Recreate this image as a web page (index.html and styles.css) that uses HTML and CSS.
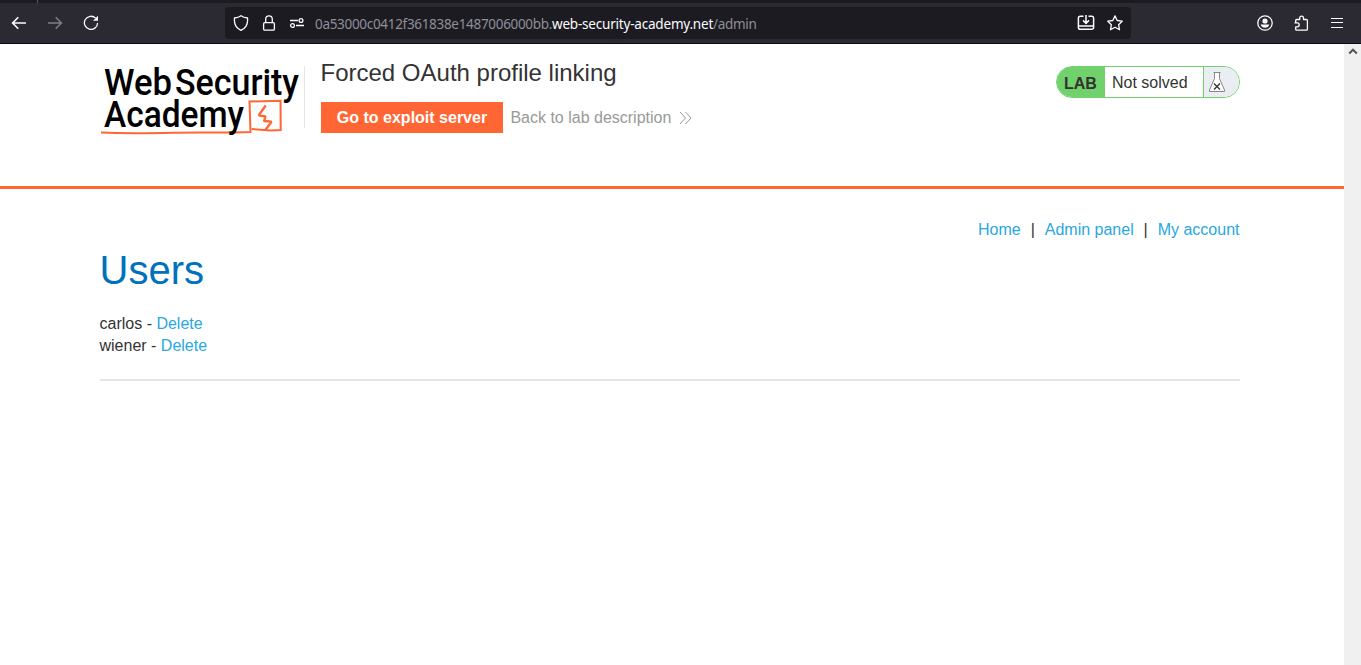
FILE: index.html
```
<!DOCTYPE html>
<html lang="en">
<head>
<meta charset="utf-8">
<title>Forced OAuth profile linking</title>
<link rel="stylesheet" href="styles.css">
</head>
<body>
<div class="tabstrip"><i class="tab-divider"></i></div>
<div class="toolbar">
  <div class="nav-buttons">
    <svg width="16" height="16" viewBox="0 0 16 16" class="icon"><path d="M15 8H1.5M7.3 2.3 1.6 8l5.7 5.7" stroke-width="1.6"/></svg>
    <svg width="16" height="16" viewBox="0 0 16 16" class="icon dim"><path d="M1 8h13.5M8.7 2.3 14.4 8l-5.7 5.7" stroke-width="1.5"/></svg>
    <svg width="16" height="16" viewBox="0 0 16 16" class="icon"><path d="M12.6 3.1A6.6 6.6 0 1 0 14.6 8"/><path class="solid" d="M15 .8v5h-5z"/></svg>
  </div>
  <div class="urlbar">
    <svg width="16" height="16" viewBox="0 0 16 16" class="icon"><path d="M8 .8c2 1.5 4.200 2 6.500 2.200.6 5.500-1.400 10-6.500 12.300C2.900 13 .9 8.500 1.500 3 3.800 2.800 6 2.300 8 .8z"/></svg>
    <svg width="16" height="16" viewBox="0 0 16 16" class="icon"><rect x="2.600" y="7.700" width="10.800" height="7.500" rx="1.200"/><path d="M4.700 7.500V4.200a3.300 3.300 0 0 1 6.600 0v3.300"/></svg>
    <svg width="16" height="16" viewBox="0 0 16 16" class="icon"><path d="M1 5.500h8M7 10.500h8" stroke-width="1.500"/><circle cx="12" cy="5.500" r="1.900"/><circle cx="3.500" cy="10.500" r="1.900"/></svg>
    <div class="url"><span class="url-sub">0a53000c0412f361838e1487006000bb.</span><span class="url-host">web-security-academy.net</span><span class="url-path">/admin</span></div>
    <svg width="18" height="16" viewBox="0 0 18 16" class="icon"><path d="M6.500 1.200H3.200a1.800 1.800 0 0 0-1.800 1.800v9.500a1.800 1.800 0 0 0 1.800 1.800h11.600a1.800 1.800 0 0 0 1.800-1.800V3a1.800 1.800 0 0 0-1.800-1.800h-3.300M1.500 11h15M9 0v8M6 5.400l3 3 3-3" stroke-width="1.500"/></svg>
    <svg width="16" height="16" viewBox="0 0 16 16" class="icon"><path d="m8 .9 2.200 4.600 5 .7-3.600 3.500.9 5L8 12.300l-4.500 2.400.9-5L.8 6.200l5-.7z" stroke-linejoin="round"/></svg>
  </div>
  <div class="tool-buttons">
    <svg width="16" height="16" viewBox="0 0 16 16" class="icon"><circle cx="8" cy="8" r="7.200"/><circle class="solid" cx="8" cy="6" r="2.600"/><path class="solid" d="M3.700 9.500h8.600c-.3 2-2.300 3.300-4.300 3.300s-4-1.300-4.300-3.300z"/></svg>
    <svg width="16" height="16" viewBox="0 0 16 16" class="icon"><path d="M2.700 7.500V5.500a1 1 0 0 1 1-1h3V3a1.900 1.900 0 0 1 3.800 0v1.500h2.900a1 1 0 0 1 1 1v8.700a1 1 0 0 1-1 1H3.700a1 1 0 0 1-1-1v-2.400h1.500a2 2 0 0 0 0-4H1.500" stroke-linejoin="round"/></svg>
    <svg width="16" height="16" viewBox="0 0 16 16" class="icon"><path d="M2 3.500h12M2 7.500h12M2 12.500h12" stroke-width="1"/></svg>
  </div>
</div>
<div class="viewport">
  <div class="page">
    <header class="lab-header">
      <svg class="logo" width="204" height="76" viewBox="0 0 204 76">
        <g class="logo-text"><text x="4" y="32.500" textLength="68" lengthAdjust="spacingAndGlyphs">Web</text><text x="75" y="32.500" textLength="124" lengthAdjust="spacingAndGlyphs">Security</text></g>
        <path class="logo-line" d="M1 70.500c25 1.200 49 .7 74 .2 25-.5 48 .3 75.500-.7L149.500 39.500l31-.8.200 29.300-10 .5-19-1.500"/>
        <g class="logo-text"><text x="4" y="65" textLength="140" lengthAdjust="spacingAndGlyphs">Academy</text></g>
        <path class="logo-bolt" d="m165.700 43.500-7 9.800 6.800 1.200-1.500 4.500 7.500.7-6 8"/>
      </svg>
      <div class="title-block">
        <h2>Forced OAuth profile linking</h2>
        <div class="actions">
          <a class="button">Go to exploit server</a>
          <a class="back">Back to lab description</a>
          <svg width="13" height="14" viewBox="0 0 13 14" class="chevrons"><path d="m1 1 5.500 6L1 13M6.500 1l5.500 6-5.500 6"/></svg>
        </div>
      </div>
      <div class="status">
        <b>LAB</b><span>Not solved</span>
        <div class="flask"><svg width="18" height="22" viewBox="0 0 18 22"><path class="glass" d="M5.500 1.500h7M6.500 1.500v6L1.500 19v1.500h15V19l-5-11.500v-6"/><path class="cross" d="m6 12.500 6 6m0-6-6 6"/></svg></div>
      </div>
    </header>
    <main>
      <nav><a>Home</a><span>|</span><a>Admin panel</a><span>|</span><a>My account</a></nav>
      <h1>Users</h1>
      <div class="user">carlos - <a>Delete</a></div>
      <div class="user">wiener - <a>Delete</a></div>
      <hr>
    </main>
  </div>
  <div class="scrollbar"><svg width="10" height="7" viewBox="0 0 10 7"><path d="M1.200 5.500 5 1.700l3.800 3.800"/></svg></div>
</div>
</body>
</html>
```
FILE: styles.css
```
* { box-sizing: border-box; }
body { margin: 0; height: 665px; display: flex; flex-direction: column; overflow: hidden; background: #fff; color: #333332; font: 16px/22px "Liberation Sans", Arial, sans-serif; }
svg { display: block; flex: none; }
.tabstrip { height: 3px; background: #1c1b22; padding-left: 37px; }
.tab-divider { display: block; width: 1px; height: 3px; background: #5b5b66; }
.toolbar { height: 41px; display: flex; align-items: center; background: #2b2a33; border-bottom: 1px solid #0c0c0d; }
.icon { fill: none; stroke: #fbfbfe; stroke-width: 1.3; }
.icon .solid { fill: #fbfbfe; stroke: none; }
.dim { opacity: .4; }
.nav-buttons { width: 225px; padding-left: 11px; display: flex; gap: 20px; }
.urlbar { width: 906px; height: 32px; border-radius: 4px; background: #1c1b22; display: flex; align-items: center; padding: 0 8px; gap: 12px; }
.url { width: 752px; margin-left: -2px; color: #8f8f98; font: 13.5px/20px "Noto Sans", sans-serif; white-space: nowrap; display: flex; padding-top: 1px; }
.url-sub { width: 237px; letter-spacing: -.31px; }
.url-host { width: 161px; color: #fbfbfe; letter-spacing: -.2px; }
.url-path { letter-spacing: -.3px; }
.tool-buttons { margin-left: 126px; display: flex; gap: 20px; }
.viewport { flex: 1; display: flex; }
.page { flex: 1; }
.lab-header { height: 145px; border-bottom: 3px solid #ff6633; padding: 18px 104px 0 100px; display: flex; align-items: flex-start; }
.logo { overflow: visible; }
.logo-text { fill: #000; font: 500 37px Roboto, sans-serif; }
.logo-line, .logo-bolt { fill: none; stroke: #ff6633; stroke-width: 2; }
.logo-bolt { stroke-width: 2.3; stroke-linejoin: bevel; }
.title-block { flex: 1; margin-top: 4px; padding-left: 16px; border-left: 1px solid #e5e5e5; height: 62px; }
h2 { margin: -7px 0 0 -.5px; font-weight: 400; font-size: 24px; line-height: 28px; }
.actions { display: flex; align-items: center; margin-top: 15px; }
.button { width: 182px; height: 31px; background: #ff6633; color: #fff; font-weight: 700; line-height: 31px; text-align: center; }
.back { margin: 0 9px 0 7.400px; color: #999; width: 159.600px; white-space: nowrap; }
.chevrons { fill: none; stroke: #999; stroke-width: 1; }
.status { width: 184px; height: 32px; margin-top: 4px; display: flex; border: 1px solid #70d16d; border-radius: 16px; overflow: hidden; line-height: 31px; }
.status b { width: 48px; padding-left: 7px; line-height: 33px; background: #70d16d; }
.status span { width: 98px; padding-left: 7px; }
.flask { flex: 1; background: #eaeef2; border-left: 1px solid #70d16d; padding: 4px 0 0 4px; }
.glass { fill: #fff; stroke: #888; }
.cross { fill: none; stroke: #333; stroke-width: 1.3; }
main { padding: 30px 104.500px 0 99.500px; }
a { color: #29a7df; }
nav { display: flex; justify-content: flex-end; }
nav span { width: 24px; text-align: center; }
h1 { margin: 17px 0 31px; font-weight: 400; font-size: 40px; line-height: 24px; color: #0071bc; }
.user { height: 22px; }
hr { margin: 22px -.5px 0 .5px; border: 0; height: 2px; background: #e5e5e5; }
.scrollbar { width: 17px; background: #f0f0f0; padding: 4px 0 0 4px; }
.scrollbar path { fill: none; stroke: #555; stroke-width: 2; }
```
